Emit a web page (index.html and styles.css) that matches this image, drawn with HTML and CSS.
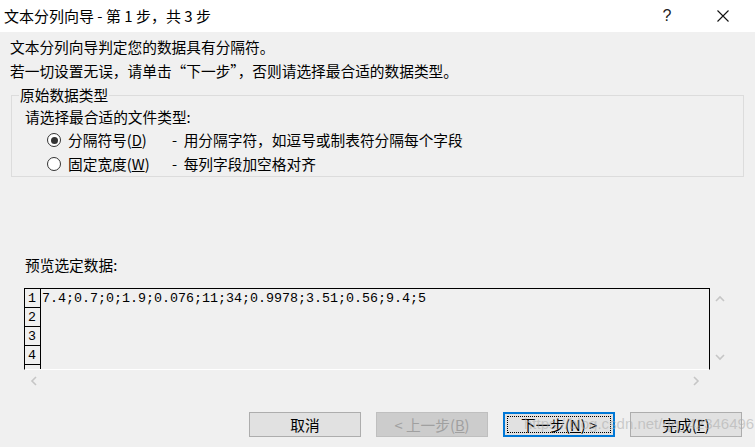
FILE: index.html
```html
<!DOCTYPE html>
<html lang="zh-CN">
<head>
<meta charset="utf-8">
<title>文本分列向导</title>
<link rel="stylesheet" href="styles.css">
</head>
<body>
<div class="dialog">
  <div class="titlebar">
    <span class="title">文本分列向导 - 第 1 步，共 3 步</span>
    <span class="spacer"></span>
    <span class="help">?</span>
    <span class="close">
      <svg width="12" height="12" viewBox="0 0 12 12"><path d="M0.5 0.5 L11.5 11.5 M11.5 0.5 L0.5 11.5" stroke="#111" stroke-width="1.1" fill="none"/></svg>
    </span>
  </div>

  <p class="line first">文本分列向导判定您的数据具有分隔符。</p>
  <p class="line">若一切设置无误，请单击“下一步”，否则请选择最合适的数据类型。</p>

  <fieldset class="group">
    <legend>原始数据类型</legend>
    <div class="group-body">
      <div class="prompt">请选择最合适的文件类型:</div>
      <div class="radio-row">
        <span class="radio checked"></span>
        <span class="rlabel">分隔符号(<u>D</u>)</span>
        <span class="rdesc">-&nbsp;&nbsp;用分隔字符，如逗号或制表符分隔每个字段</span>
      </div>
      <div class="radio-row">
        <span class="radio"></span>
        <span class="rlabel">固定宽度(<u>W</u>)</span>
        <span class="rdesc">-&nbsp;&nbsp;每列字段加空格对齐</span>
      </div>
    </div>
  </fieldset>

  <div class="preview-label">预览选定数据:</div>

  <div class="preview">
    <div class="main">
      <div class="row"><span class="num">1</span><span class="data">7.4;0.7;0;1.9;0.076;11;34;0.9978;3.51;0.56;9.4;5</span></div>
      <div class="row"><span class="num">2</span><span class="data"></span></div>
      <div class="row"><span class="num">3</span><span class="data"></span></div>
      <div class="row"><span class="num">4</span><span class="data"></span></div>
      <div class="row"><span class="num"></span><span class="data"></span></div>
    </div>
    <div class="vscroll">
      <svg width="10" height="7" viewBox="0 0 10 7"><path d="M1 6 L5 2 L9 6" stroke="#c6c6c6" stroke-width="1.6" fill="none"/></svg>
      <svg width="10" height="7" viewBox="0 0 10 7"><path d="M1 1 L5 5 L9 1" stroke="#c6c6c6" stroke-width="1.6" fill="none"/></svg>
    </div>
    <div class="hscroll">
      <svg width="7" height="10" viewBox="0 0 7 10"><path d="M6 1 L2 5 L6 9" stroke="#c6c6c6" stroke-width="1.6" fill="none"/></svg>
      <svg width="7" height="10" viewBox="0 0 7 10"><path d="M1 1 L5 5 L1 9" stroke="#c6c6c6" stroke-width="1.6" fill="none"/></svg>
    </div>
    <div class="corner"></div>
  </div>

  <div class="buttons">
    <button class="btn">取消</button>
    <button class="btn disabled">&lt;&nbsp;上一步(<u>B</u>)</button>
    <button class="btn default"><span class="focus">下一步(<u>N</u>)&nbsp;&gt;</span></button>
    <button class="btn">完成(<u>F</u>)</button>
    <span class="watermark">https://blog.csdn.net/qq_42346496</span>
  </div>
</div>
</body>
</html>
```

FILE: styles.css
```css
* { box-sizing: border-box; }

html, body {
  margin: 0;
  padding: 0;
}

body {
  width: 755px;
  height: 447px;
  overflow: hidden;
  background: #f0f0f0;
  font-family: "Noto Sans CJK SC", "Noto Sans", sans-serif;
  color: #000;
}

.dialog {
  width: 755px;
  height: 447px;
  background: #f0f0f0;
}

.titlebar {
  height: 32px;
  background: #fff;
  display: flex;
  align-items: center;
  padding-left: 4px;
}

.title {
  font-size: 15px;
  line-height: 20px;
  color: #000;
}

.spacer { flex: 1; }

.help {
  width: 20px;
  margin-right: 36px;
  text-align: center;
  font-family: "Liberation Sans", sans-serif;
  font-size: 16px;
  line-height: 20px;
  color: #222;
}

.close {
  width: 20px;
  margin-right: 22px;
  display: flex;
  justify-content: center;
  align-items: center;
}

.line {
  margin: 0 0 0 10px;
  font-size: 14.7px;
  line-height: 24px;
  white-space: nowrap;
}

.line.first { margin-top: 3px; }

.group {
  margin: 2px 11px 0 11px;
  padding: 1px 10px 0 7px;
  border: 1px solid #dcdcdc;
  min-width: 0;
}

.group legend {
  padding: 0 1px;
  font-size: 14.7px;
  line-height: 20px;
}

.group-body {
  margin-left: 6px;
  font-size: 14.7px;
}

.prompt {
  line-height: 22px;
}

.radio-row {
  display: flex;
  align-items: center;
  height: 24px;
  white-space: nowrap;
}

.radio {
  width: 14px;
  height: 14px;
  margin-left: 22px;
  margin-right: 7px;
  border-radius: 50%;
  border: 1px solid #333;
  background: #fff;
  display: flex;
  align-items: center;
  justify-content: center;
}

.radio.checked {
  border: 1.5px solid #333;
}

.radio.checked::after {
  content: "";
  width: 7px;
  height: 7px;
  border-radius: 50%;
  background: #333;
}

.rlabel {
  width: 104px;
  line-height: 24px;
}

.rdesc {
  line-height: 24px;
}

.preview-label {
  margin: 78px 0 0 25px;
  font-size: 14.7px;
  line-height: 20px;
}

.preview {
  margin: 13px 0 0 24px;
  display: grid;
  grid-template-columns: 686px 19px;
  grid-template-rows: 82px 21px;
  width: 705px;
}

.main {
  border-top: 1px solid #000;
  border-left: 1px solid #000;
  border-right: 1px solid #000;
  border-bottom: 1px solid #fff;
  overflow: hidden;
}

.row {
  display: flex;
  height: 19px;
}

.num {
  width: 16px;
  flex: none;
  border-right: 1px solid #000;
  border-bottom: 1px solid #000;
  padding-left: 3px;
  font-family: "Liberation Mono", monospace;
  font-size: 13.33px;
  line-height: 19px;
}

.data {
  padding-left: 1px;
  font-family: "Liberation Mono", monospace;
  font-size: 13.33px;
  line-height: 19px;
  white-space: pre;
}

.vscroll {
  display: flex;
  flex-direction: column;
  justify-content: space-between;
  align-items: center;
  padding: 7px 0 9px 1px;
}

.hscroll {
  display: flex;
  justify-content: space-between;
  align-items: center;
  padding: 0 10px 0 6px;
}

.buttons {
  position: relative;
  margin-top: 21px;
  display: flex;
  justify-content: flex-end;
  gap: 15px;
  padding-right: 13px;
}

.btn {
  width: 112px;
  height: 25px;
  padding: 0;
  border: 1px solid #adadad;
  background: #e1e1e1;
  font-family: "Noto Sans CJK SC", "Noto Sans", sans-serif;
  font-size: 14.7px;
  line-height: 21px;
  color: #000;
  display: flex;
  align-items: center;
  justify-content: center;
}

.btn.disabled {
  background: #cccccc;
  border-color: #bfbfbf;
  color: #a0a0a0;
}

.btn.default {
  border: 2px solid #0078d7;
  padding: 2px;
}

.focus {
  flex: 1;
  align-self: stretch;
  border: 1px dotted #000;
  display: flex;
  align-items: center;
  justify-content: center;
  line-height: 17px;
}

.watermark {
  position: absolute;
  left: 524px;
  top: 3px;
  font-family: "Liberation Sans", sans-serif;
  font-size: 15px;
  color: rgba(170, 170, 170, 0.55);
  white-space: nowrap;
  pointer-events: none;
}
```
